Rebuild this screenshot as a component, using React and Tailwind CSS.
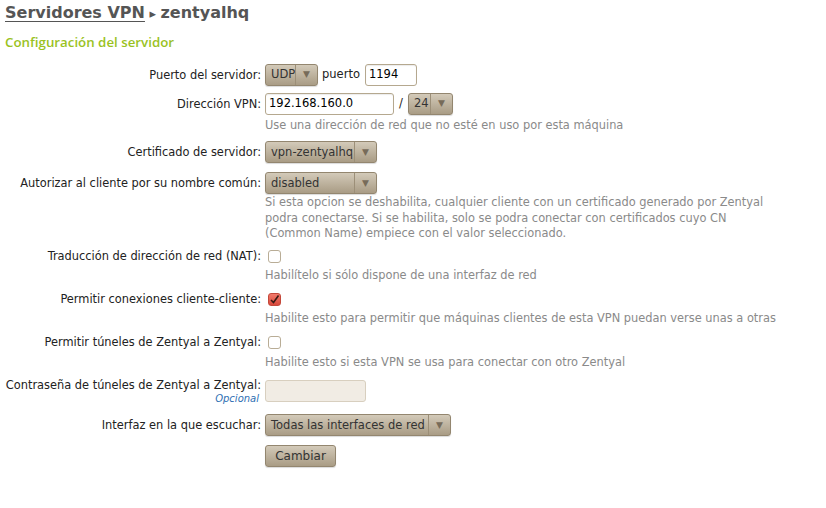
import React from 'react';

const font = { fontFamily: '"DejaVu Sans", Verdana, sans-serif' };

function Select({ value, width }) {
  return (
    <div
      className={`flex h-[22px] items-stretch rounded-[3px] border border-[#93866f] bg-gradient-to-b from-[#d3cab9] to-[#a99c85] text-[11.5px] text-[#333] shadow-[0_1px_1px_rgba(0,0,0,0.15)] ${width}`}
    >
      <span className="flex flex-1 items-center overflow-hidden whitespace-nowrap pl-[5px] pr-1">{value}</span>
      <span className="flex w-[22px] items-center justify-center border-l border-[#9c8f78] text-[9px] text-[#776b59]">▼</span>
    </div>
  );
}

function Input({ value, width, disabled }) {
  return (
    <div
      className={`flex h-[22px] items-center rounded-[3px] border px-[3px] text-[11.5px] text-black ${width} ${
        disabled ? 'border-[#d8cfbf] bg-[#f1ece4]' : 'border-[#b5a88f] bg-white shadow-[inset_0_1px_1px_rgba(0,0,0,0.08)]'
      }`}
    >
      {value}
    </div>
  );
}

function Checkbox({ checked }) {
  if (checked) {
    return (
      <div className="mt-[1px] flex h-[13px] w-[13px] items-center justify-center rounded-[3px] border border-[#c4483a] bg-gradient-to-b from-[#f27a6c] to-[#d8473a]">
        <svg width="11" height="11" viewBox="0 0 11 11">
          <path d="M2 6 L4.5 8.5 L9.5 1.5" fill="none" stroke="#3a1a14" strokeWidth="1.6" />
        </svg>
      </div>
    );
  }
  return <div className="mt-[1px] h-[13px] w-[13px] rounded-[3px] border border-[#b9ad96] bg-white" />;
}

function Row({ label, sub, children, help, className = '', labelClass = 'leading-[22px]', helpMt = 'mt-[3px]' }) {
  return (
    <div className={`flex ${className}`}>
      <div className={`w-[261px] shrink-0 text-right text-[11.4px] text-[#222] ${labelClass}`}>
        {label}
        {sub && <div className="mt-[1px] pr-[2px] text-[10px] italic leading-[12px] text-[#2f6fb3]">{sub}</div>}
      </div>
      <div className="ml-[4px]">
        {children}
        {help && <div className={`${helpMt} text-[11.4px] leading-[15.5px] text-[#8a8a8a]`}>{help}</div>}
      </div>
    </div>
  );
}

export default function App() {
  return (
    <div className="h-[508px] w-[826px] bg-white" style={font}>
      <div className="px-[5px] pt-[1px] text-[16px] font-bold leading-[24px] text-[#555]">
        <span className="underline decoration-1 underline-offset-[3px]">Servidores VPN</span>
        <span className="text-[13px]"> ▸ </span>
        <span>zentyalhq</span>
      </div>
      <div className="mt-[7px] px-[5px] text-[13.3px] font-semibold text-[#9ac21f]" style={{ fontFamily: '"Open Sans", sans-serif' }}>
        Configuración del servidor
      </div>

      <div className="mt-[11px]">
        <Row label="Puerto del servidor:">
          <div className="flex items-center">
            <Select value="UDP" width="w-[53px]" />
            <span className="ml-[4px] mr-[5px] text-[11.5px] text-[#222]">puerto</span>
            <Input value="1194" width="w-[52px]" />
          </div>
        </Row>

        <Row label="Dirección VPN:" className="mt-[7px]" help="Use una dirección de red que no esté en uso por esta máquina">
          <div className="flex items-center">
            <Input value="192.168.160.0" width="w-[129px]" />
            <span className="ml-[5px] mr-[5px] text-[11.5px] text-[#222]">/</span>
            <Select value="24" width="w-[45px]" />
          </div>
        </Row>

        <Row label="Certificado de servidor:" className="mt-[8px]">
          <Select value="vpn-zentyalhq" width="w-[112px]" />
        </Row>

        <Row
          label="Autorizar al cliente por su nombre común:"
          className="mt-[9px]"
          helpMt="mt-[1px]"
          help={
            <>
              Si esta opcion se deshabilita, cualquier cliente con un certificado generado por Zentyal
              <br />
              podra conectarse. Si se habilita, solo se podra conectar con certificados cuyo CN
              <br />
              (Common Name) empiece con el valor seleccionado.
            </>
          }
        >
          <Select value="disabled" width="w-[112px]" />
        </Row>

        <Row
          label="Traducción de dirección de red (NAT):"
          className="mt-[7px]"
          labelClass="leading-[15px]"
          helpMt="mt-[5px]"
          help="Habilítelo si sólo dispone de una interfaz de red"
        >
          <div className="pl-[3px]">
            <Checkbox />
          </div>
        </Row>

        <Row
          label="Permitir conexiones cliente-cliente:"
          className="mt-[9px]"
          labelClass="leading-[15px]"
          helpMt="mt-[5px]"
          help="Habilite esto para permitir que máquinas clientes de esta VPN puedan verse unas a otras"
        >
          <div className="pl-[3px]">
            <Checkbox checked />
          </div>
        </Row>

        <Row
          label="Permitir túneles de Zentyal a Zentyal:"
          className="mt-[8px]"
          labelClass="leading-[15px]"
          helpMt="mt-[6px]"
          help="Habilite esto si esta VPN se usa para conectar con otro Zentyal"
        >
          <div className="pl-[3px]">
            <Checkbox />
          </div>
        </Row>

        <Row label="Contraseña de túneles de Zentyal a Zentyal:" sub="Opcional" className="mt-[10px]" labelClass="leading-[14px] -mt-[2px]">
          <Input value="" width="w-[101px]" disabled />
        </Row>

        <Row label="Interfaz en la que escuchar:" className="mt-[9px]">
          <Select value="Todas las interfaces de red" width="w-[186px]" />
        </Row>

        <Row label="" className="mt-[7px]">
          <button className="h-[22px] w-[71px] rounded-[3px] border border-[#93866f] bg-gradient-to-b from-[#d3cab9] to-[#a99c85] text-[12px] text-[#333] shadow-[0_1px_1px_rgba(0,0,0,0.15)]">
            Cambiar
          </button>
        </Row>
      </div>
    </div>
  );
}
